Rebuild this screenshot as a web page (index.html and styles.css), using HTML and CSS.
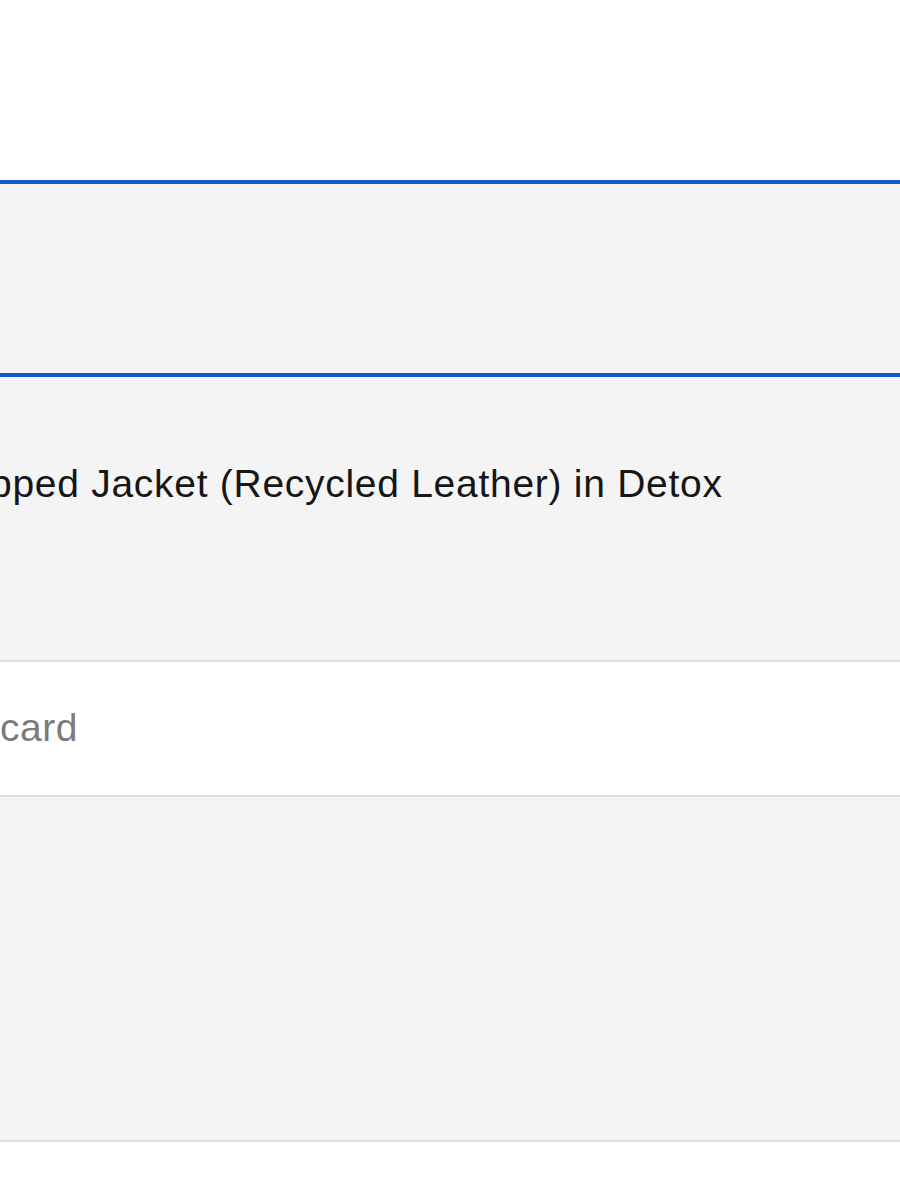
FILE: index.html
```html
<!DOCTYPE html>
<html lang="en">
<head>
<meta charset="utf-8">
<title>Order</title>
<link rel="stylesheet" href="styles.css">
</head>
<body>
<div class="page">
  <div class="top-space"></div>
  <div class="selected-row"></div>
  <div class="item-row">
    <p class="item-title">pped Jacket (Recycled Leather) in Detox</p>
  </div>
  <div class="field-row">
    <p class="field-label">card</p>
  </div>
  <div class="panel-row"></div>
</div>
</body>
</html>
```
FILE: styles.css
```css
html, body {
  margin: 0;
  padding: 0;
  background: #ffffff;
}
.page {
  width: 900px;
  overflow: hidden;
  font-family: "Liberation Sans", Arial, sans-serif;
}
.top-space {
  height: 180px;
}
.selected-row {
  box-sizing: border-box;
  height: 197px;
  background: #f4f4f4;
  border-top: 4px solid #1659c6;
  border-bottom: 4px solid #1659c6;
}
.item-row {
  box-sizing: border-box;
  height: 285px;
  background: #f4f4f4;
  border-bottom: 2px solid #dedede;
  padding-top: 83px;
}
.item-title {
  margin: 0 0 0 -10px;
  font-size: 39px;
  line-height: 48px;
  letter-spacing: 0.72px;
  color: #161616;
  white-space: nowrap;
}
.field-row {
  box-sizing: border-box;
  height: 135px;
  background: #ffffff;
  border-bottom: 2px solid #dedede;
  padding-top: 42px;
}
.field-label {
  margin: 0;
  font-size: 39px;
  line-height: 48px;
  letter-spacing: 0.5px;
  color: #7b7b7b;
}
.panel-row {
  box-sizing: border-box;
  height: 345px;
  background: #f4f4f4;
  border-bottom: 2px solid #dedede;
}
```
